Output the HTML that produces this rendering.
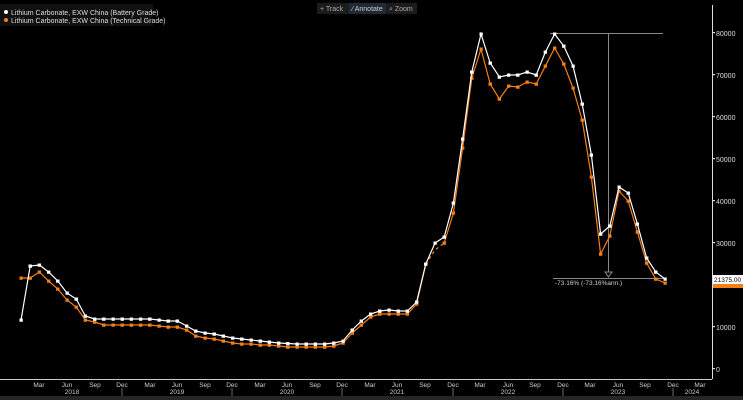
<!DOCTYPE html>
<html><head><style>
html,body{margin:0;padding:0;background:#000;width:743px;height:400px;overflow:hidden;font-family:"Liberation Sans",sans-serif}
</style></head><body>
<svg width="743" height="400" viewBox="0 0 743 400" xmlns="http://www.w3.org/2000/svg" font-family="Liberation Sans, sans-serif">
<defs>
<marker id="mw" viewBox="0 0 4 4" refX="2" refY="2" markerWidth="3.5" markerHeight="3.5" markerUnits="userSpaceOnUse"><rect width="4" height="4" fill="#fff"/></marker>
<marker id="mo" viewBox="0 0 4 4" refX="2" refY="2" markerWidth="3.5" markerHeight="3.5" markerUnits="userSpaceOnUse"><rect width="4" height="4" fill="#f57f17"/></marker>
</defs>
<rect width="743" height="400" fill="#000"/>
<rect x="0" y="4" width="153" height="22" fill="#111"/>
<circle cx="6" cy="12" r="2" fill="#fff"/>
<circle cx="6" cy="20" r="2" fill="#f57f17"/>
<text x="11" y="15" font-size="7" fill="#ddd">Lithium Carbonate, EXW China (Battery Grade)</text>
<text x="11" y="23" font-size="7" fill="#ddd">Lithium Carbonate, EXW China (Technical Grade)</text>
<rect x="317" y="3" width="32" height="11" fill="#1c1c1c"/>
<rect x="349" y="3" width="37" height="11" fill="#1f2a36"/>
<rect x="386" y="3" width="31" height="11" fill="#1c1c1c"/>
<text x="320" y="11" font-size="7" fill="#aaa">+ Track</text>
<text x="352" y="11" font-size="7" fill="#ccc">⁄ Annotate</text>
<text x="389" y="11" font-size="7" fill="#aaa">⌕ Zoom</text>
<line x1="712.5" y1="5" x2="712.5" y2="379" stroke="#ddd" stroke-width="1"/>
<g fill="#ddd" font-size="7">
<rect x="712" y="32" width="3" height="1.2"/><text x="716" y="36">80000</text>
<rect x="712" y="74" width="3" height="1.2"/><text x="716" y="78">70000</text>
<rect x="712" y="116" width="3" height="1.2"/><text x="716" y="120">60000</text>
<rect x="712" y="158" width="3" height="1.2"/><text x="716" y="162">50000</text>
<rect x="712" y="200" width="3" height="1.2"/><text x="716" y="204">40000</text>
<rect x="712" y="242" width="3" height="1.2"/><text x="716" y="246">30000</text>
<rect x="712" y="326" width="3" height="1.2"/><text x="716" y="330">10000</text>
<rect x="712" y="368" width="3" height="1.2"/><text x="716" y="372">0</text>
</g>
<line x1="0" y1="379.5" x2="712" y2="379.5" stroke="#ccc"/>
<g fill="#ccc" font-size="6.5" text-anchor="middle">
<text x="39" y="387">Mar</text><text x="67" y="387">Jun</text><text x="95" y="387">Sep</text><text x="122" y="387">Dec</text>
<text x="150" y="387">Mar</text><text x="177" y="387">Jun</text><text x="205" y="387">Sep</text><text x="232" y="387">Dec</text>
<text x="260" y="387">Mar</text><text x="287" y="387">Jun</text><text x="315" y="387">Sep</text><text x="342" y="387">Dec</text>
<text x="370" y="387">Mar</text><text x="397" y="387">Jun</text><text x="425" y="387">Sep</text><text x="453" y="387">Dec</text>
<text x="480" y="387">Mar</text><text x="508" y="387">Jun</text><text x="535" y="387">Sep</text><text x="563" y="387">Dec</text>
<text x="590" y="387">Mar</text><text x="618" y="387">Jun</text><text x="645" y="387">Sep</text><text x="673" y="387">Dec</text>
<text x="700" y="387">Mar</text>
<text x="72" y="394">2018</text><text x="177" y="394">2019</text><text x="287" y="394">2020</text><text x="397" y="394">2021</text><text x="508" y="394">2022</text><text x="618" y="394">2023</text><text x="692" y="394">2024</text>
</g>
<g stroke="#888" stroke-width="0.8">
<line x1="122" y1="388" x2="122" y2="396"/><line x1="232" y1="388" x2="232" y2="396"/><line x1="342" y1="388" x2="342" y2="396"/><line x1="453" y1="388" x2="453" y2="396"/><line x1="563" y1="388" x2="563" y2="396"/><line x1="673" y1="388" x2="673" y2="396"/>
</g>
<rect x="0" y="396" width="743" height="4" fill="#262626"/>
<g stroke="#888" stroke-width="1" fill="none">
<line x1="550" y1="33.5" x2="663" y2="33.5"/>
<line x1="608.5" y1="34" x2="608.5" y2="272"/>
<line x1="553" y1="278.5" x2="665" y2="278.5"/>
<path d="M605 272 L612 272 L608.5 277 Z"/>
</g>
<text x="555" y="285" font-size="6.5" fill="#ccc">-73.16% (-73.16%ann.)</text>
<polyline fill="none" stroke="#f57f17" stroke-width="1.2" marker-start="url(#mo)" marker-mid="url(#mo)" marker-end="url(#mo)" points="21,278 30.2,278 39.4,272 48.6,281 57.8,289 67,300 76.2,307 85.4,320 94.6,322 103.8,325 113,325 122.2,325 131.4,325 140.6,325 149.8,325 159,326 168.2,327 177.4,327 186.6,330 195.8,336 205,338 214.2,339 223.4,341 232.6,343 241.8,344 251,344 260.2,345 269.4,345 278.6,346 287.8,347 297,347 306.2,347 315.4,347 324.6,347 333.8,346 343,343 352.2,333 361.4,325 370.6,317 379.8,314 389,314 398.2,314 407.4,314 416.6,304 425.8,264"/>
<polyline fill="none" stroke="#f57f17" stroke-width="1.2" stroke-dasharray="3,3" points="425.8,264 435,250 444.2,243"/>
<polyline fill="none" stroke="#f57f17" stroke-width="1.2" marker-start="url(#mo)" marker-mid="url(#mo)" marker-end="url(#mo)" points="444.2,243 453.4,213 462.6,148 471.8,78 481,49 490.2,84 499.4,99 508.6,86 517.8,87 527,82 536.2,84 545.4,66 554.6,48 563.8,64 573,88 582.2,120 591.4,177 600.6,254 609.8,236 619,191 628.2,201 637.4,232 646.6,263 655.8,279 665,283"/>
<polyline fill="none" stroke="#fff" stroke-width="1.2" marker-start="url(#mw)" marker-mid="url(#mw)" marker-end="url(#mw)" points="21,320 30.2,266 39.4,265 48.6,272 57.8,281 67,293 76.2,299 85.4,316 94.6,319 103.8,319 113,319 122.2,319 131.4,319 140.6,319 149.8,319 159,320 168.2,321 177.4,321 186.6,326 195.8,331 205,333 214.2,334 223.4,336 232.6,338 241.8,339 251,340 260.2,341 269.4,342 278.6,343 287.8,343.5 297,344 306.2,344 315.4,344 324.6,344 333.8,343 343,341 352.2,330 361.4,321 370.6,314 379.8,311 389,310 398.2,311 407.4,311 416.6,302 425.8,264 435,243 444.2,237 453.4,203 462.6,139 471.8,72 481,34 490.2,63 499.4,77 508.6,75 517.8,75 527,72 536.2,75 545.4,52 554.6,34 563.8,46 573,66 582.2,104 591.4,155 600.6,234 609.8,226 619,187 628.2,193 637.4,224 646.6,258 655.8,272 665,279"/>
<rect x="713" y="275" width="30" height="9" fill="#fff"/>
<text x="714" y="282" font-size="6.5" fill="#000">21375.00</text>
<rect x="713" y="284" width="30" height="4" fill="#f57f17"/>
</svg>
</body></html>
